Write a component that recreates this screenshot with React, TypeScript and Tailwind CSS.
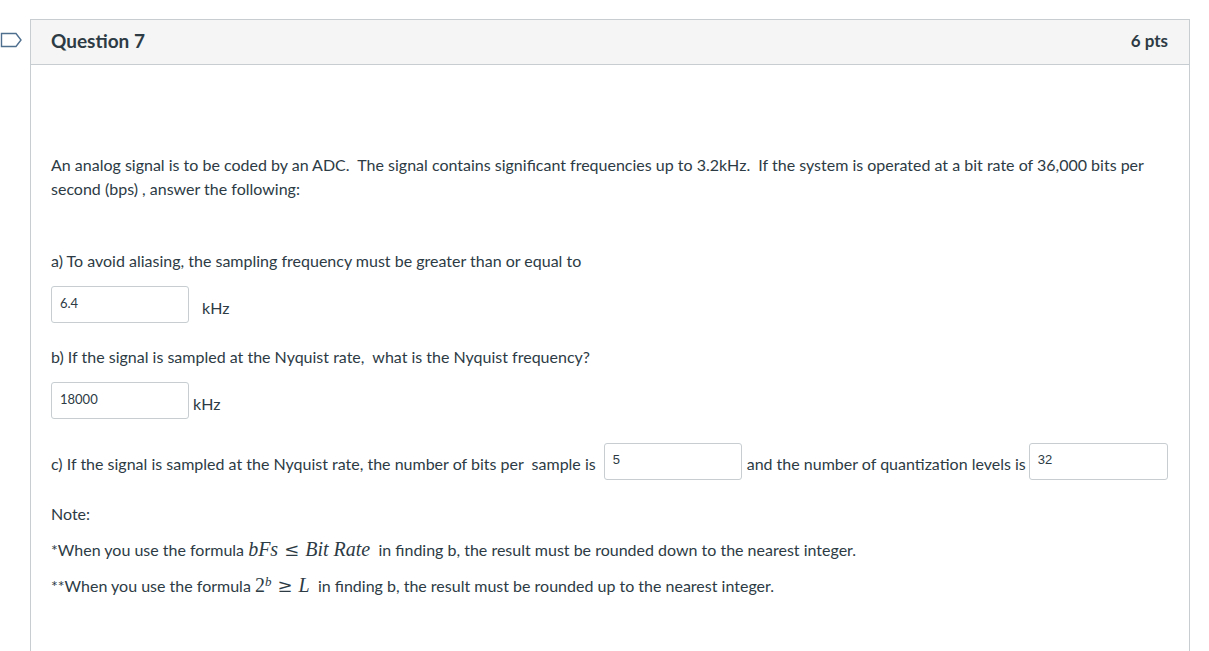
import * as React from "react"

function Flag() {
  return (
    <svg width="23" height="16" viewBox="0 0 23 16" className="absolute left-0 top-[32px]">
      <path d="M1.5 1.5 H16 L21 8 L16 14.5 H1.5 Z" fill="none" stroke="#4f6f8f" strokeWidth="1.4" />
    </svg>
  )
}

function Field({ value, w = "w-[138px]", font = "font-['Lato',sans-serif]" }: { value: string; w?: string; font?: string }) {
  return (
    <div className={`${w} h-[37px] shrink-0 rounded-[3px] border border-[#c7cdd1] bg-white px-[8px] pt-[8px] text-[13px] leading-[16px] text-[#2d3b45] ${font}`}>
      {value}
    </div>
  )
}

function M({ children }: { children: React.ReactNode }) {
  return <span className="font-['Liberation_Serif',serif] italic text-[20px] leading-[20px]">{children}</span>
}

export default function App() {
  return (
    <div className="relative min-h-[651px] bg-white font-['Lato',sans-serif] text-[#2d3b45]">
      <Flag />
      <div className="ml-[30px] w-[1160px] pt-[19px]">
        <div className="border-x border-t border-[#c7cdd1]">
          {/* Header */}
          <div className="flex h-[45px] items-center justify-between border-b border-[#c7cdd1] bg-[#f5f5f5] pb-[2px] pl-[20px] pr-[21px]">
            <h2 className="text-[19px] font-bold">Question 7</h2>
            <span className="text-[17px] font-bold">6 pts</span>
          </div>

          {/* Body */}
          <div className="px-[20px] pt-[88px] pb-[60px] text-[16px] leading-[24px]">
            <p className="pr-[20px]">
              An analog signal is to be coded by an ADC.&nbsp; The signal contains significant frequencies up to 3.2kHz.&nbsp; If the system is operated at a bit rate of 36,000 bits per second (bps) , answer the following:
            </p>

            <p className="mt-[48px]">a) To avoid aliasing, the sampling frequency must be greater than or equal to</p>
            <div className="mt-[13px] flex items-center gap-[13px]">
              <Field value="6.4" />
              <span className="mt-[6px]">kHz</span>
            </div>

            <p className="mt-[22px]">b) If the signal is sampled at the Nyquist rate,&nbsp; what is the Nyquist frequency?</p>
            <div className="mt-[13px] flex items-center gap-[4px]">
              <Field value="18000" />
              <span className="mt-[6px]">kHz</span>
            </div>

            <div className="mt-[24px] flex items-start">
              <span className="mt-[9px]">c) If the signal is sampled at the Nyquist rate, the number of bits per&nbsp; sample is</span>
              <div className="ml-[8px] mr-[5px]">
                <Field value="5" w="w-[138px]" font="font-['Liberation_Sans',sans-serif]" />
              </div>
              <span className="mt-[9px]">and the number of quantization levels is</span>
              <div className="ml-[3px]">
                <Field value="32" w="w-[139px]" font="font-['Liberation_Sans',sans-serif]" />
              </div>
            </div>

            <p className="mt-[22px]">Note:</p>
            <p className="mt-[12px]">
              *When you use the formula <M>bFs</M>
              <span className="mx-[6px] font-['DejaVu_Serif',serif] text-[18px] leading-[18px]">≤</span>
              <M>Bit Rate</M>&nbsp;&nbsp;in finding b, the result must be rounded down to the nearest integer.
            </p>
            <p className="mt-[12px]">
              **When you use the formula{" "}
              <span className="font-['Liberation_Serif',serif] text-[20px] leading-[20px]">
                2<sup className="italic text-[13px]">b</sup>
              </span>
              <span className="mx-[6px] font-['DejaVu_Serif',serif] text-[18px] leading-[18px]">≥</span>
              <M>L</M>&nbsp;&nbsp;in finding b, the result must be rounded up to the nearest integer.
            </p>
          </div>
        </div>
      </div>
    </div>
  )
}
